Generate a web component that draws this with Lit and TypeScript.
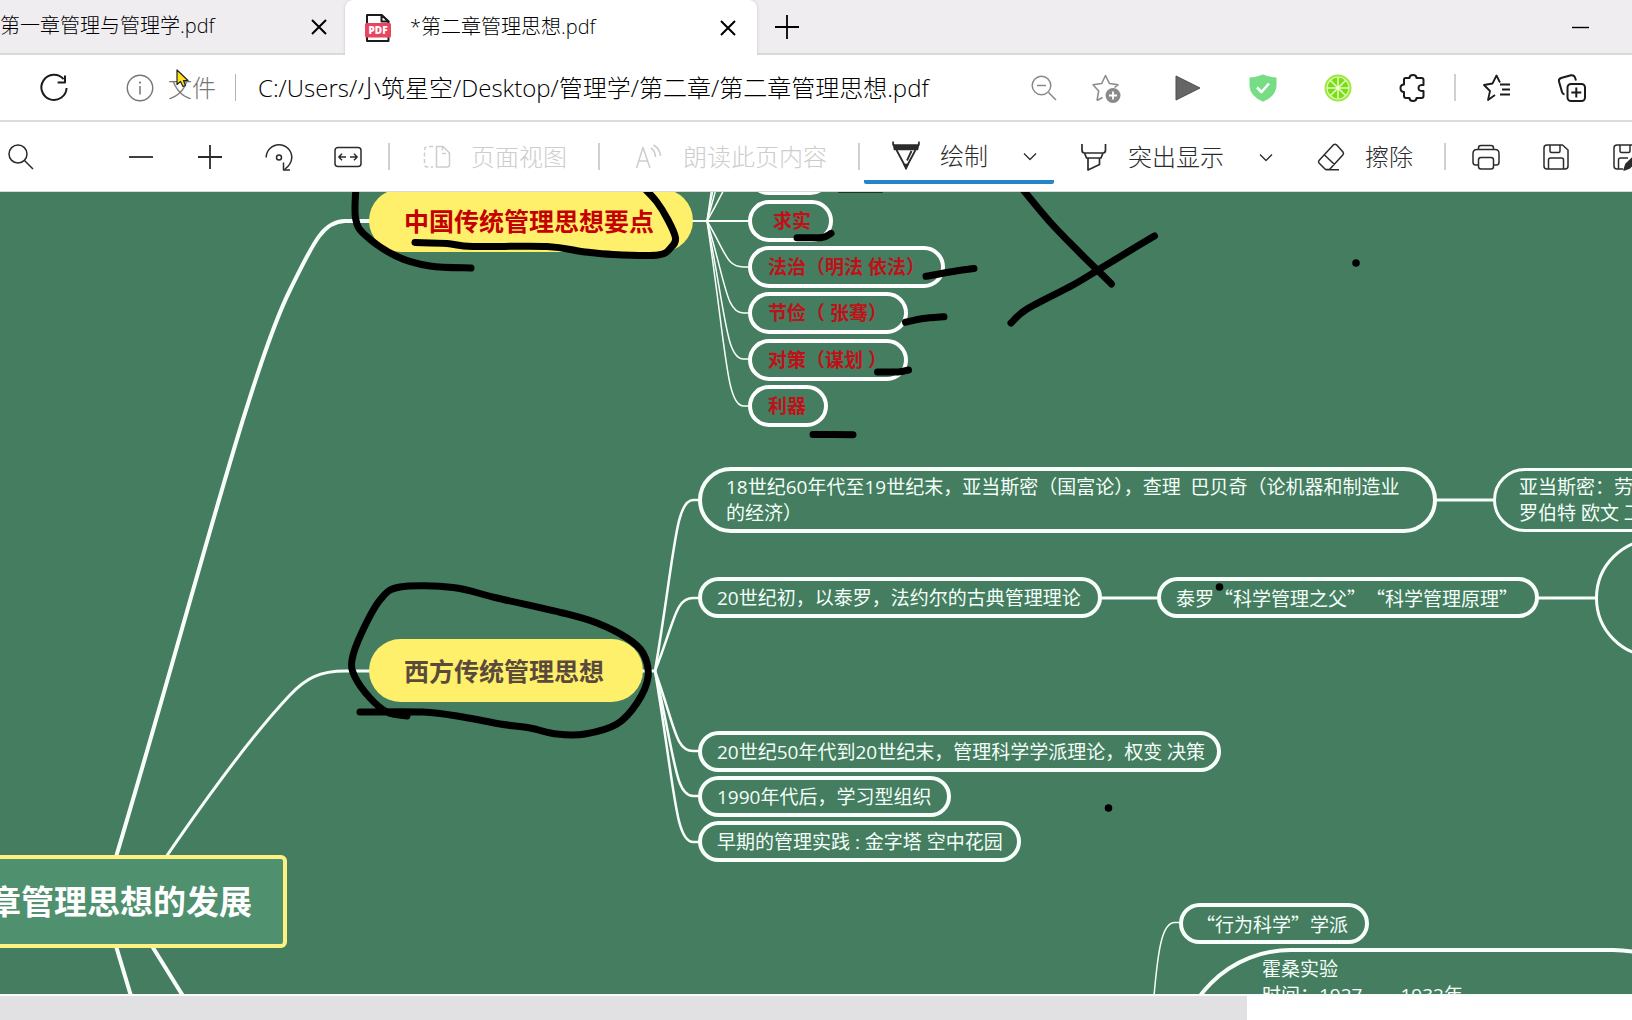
import { LitElement, html, svg, css } from "lit";
import { customElement, property } from "lit/decorators.js";
import { styleMap } from "lit/directives/style-map.js";

type Pt = [number, number];

/** Smooth path through a list of points (Catmull-Rom to cubic Bézier). */
function smooth(pts: Pt[]): string {
  let d = `M${pts[0][0]} ${pts[0][1]}`;
  for (let i = 0; i < pts.length - 1; i++) {
    const a = pts[Math.max(0, i - 1)];
    const b = pts[i];
    const c = pts[i + 1];
    const e = pts[Math.min(pts.length - 1, i + 2)];
    const r = (n: number) => Math.round(n * 10) / 10;
    d += `C${r(b[0] + (c[0] - a[0]) / 6)} ${r(b[1] + (c[1] - a[1]) / 6)} ${r(c[0] - (e[0] - b[0]) / 6)} ${r(c[1] - (e[1] - b[1]) / 6)} ${c[0]} ${c[1]}`;
  }
  return d;
}

/** Branch line from a hub to the left edge of a child topic. */
function branch(hx: number, hy: number, x: number, y: number): string {
  const dx = x - hx;
  return `M${hx} ${hy}C${hx + dx * 0.45} ${hy + (y - hy) * 0.7} ${hx + dx * 0.45} ${y} ${hx + dx * 0.85} ${y}L${x} ${y}`;
}

const icons: Record<string, unknown> = {
  close: svg`<path d="M7 7L21 21M21 7L7 21" stroke-width="2"/>`,
  plus: svg`<path d="M14 2V26M2 14H26" stroke-width="1.800"/>`,
  minus: svg`<path d="M2 14H26" stroke-width="1.800"/>`,
  minimise: svg`<path d="M6 14.500H23" stroke-width="1.400"/>`,
  reload: svg`<path d="M23.6 5.2A12.6 12.6 0 1 0 26.6 14" stroke-width="2"/><path d="M25 1.5V8.6H17.6" stroke-width="2"/>`,
  info: svg`<circle cx="14" cy="14" r="12.7" stroke-width="1.4"/><path d="M14 12V20.5" stroke-width="1.5"/><circle cx="14" cy="8.6" r="1.1" fill="currentColor" stroke="none"/>`,
  zoomOut: svg`<circle cx="11.500" cy="11.500" r="9.3"/><path d="M18.500 18.500L26 26M7 11.500H16"/>`,
  starAdd: svg`<path d="M5 26.500L6.700 17L1 10.800L9.600 9.600L13.500 1.500L17.500 9.600L26 10.800L22.500 13.500M5 26.500L10.500 23.500"/><circle cx="21" cy="21.500" r="7.500" fill="currentColor" stroke="none"/><path d="M21 17.500V25.500M17 21.500H25" stroke="#fff" stroke-width="1.800"/>`,
  play: svg`<path d="M2 2L26 14L2 26Z" fill="#666" stroke="#4d4d4d" stroke-width="1"/>`,
  shield: svg`<path d="M14 .5Q20 3 27.500 3.500V12Q27 22 14 27.800Q1 22 .5 12V3.500Q8 3 14 .5Z" fill="#77dd85" stroke="none"/><path d="M8 13.500L12.500 18L20 9.500" stroke="#fff" stroke-width="2.600"/>`,
  lime: svg`<circle cx="14" cy="14" r="13.500" fill="#9be83f" stroke="none"/><circle cx="14" cy="14" r="11" fill="#7bdc18" stroke="#d8f7a8" stroke-width="1.200"/><path d="M14 3V25M3 14H25M6.200 6.200L21.800 21.800M21.800 6.200L6.200 21.800" stroke="#e4fbc0" stroke-width="1.600"/><circle cx="14" cy="14" r="2" fill="#effcd6" stroke="none"/>`,
  puzzle: svg`<path d="M5 5.500Q5 4 6.500 4H10.500Q10.500 .9 14 .9Q17.500 .9 17.500 4H22.500Q24.500 4 24.500 6V11Q19.500 10.500 19.500 14Q19.500 17.500 24.500 17V22Q24.500 24 22.500 24H17.500Q17.500 27.100 14 27.100Q10.500 27.100 10.500 24H7Q5 24 5 22V18Q1.500 18 1.500 14Q1.500 10.500 5 10.500Z" stroke-width="2"/>`,
  starList: svg`<path d="M12 21L5 26L7 17L1 11L9.500 9.500L13.500 1.500L17 8.500M17 10.500H27M19 15.500H27M17 20.500H27" stroke-width="1.800"/>`,
  collect: svg`<rect x="9.500" y="10" width="17.500" height="17" rx="3.500" stroke-width="2"/><path d="M18.300 13.500V23.500M13.300 18.500H23.300" stroke-width="2"/><path d="M6.500 20.500Q4.500 20 4 18L1 7.500Q.5 5 3 4L13 1.300Q16 .8 17 3.500L18 6.500" stroke-width="2"/>`,
  search: svg`<circle cx="11" cy="11" r="9"/><path d="M17.500 17.500L26 26"/>`,
  rotate: svg`<path d="M1.200 14.500A12.800 12.800 0 0 1 26.800 14.500Q26.500 21.500 19.500 26.500"/><path d="M18.500 19.500V27H25"/><circle cx="14" cy="14.500" r="2.500"/>`,
  fit: svg`<rect x="1" y="4.500" width="26" height="19" rx="3"/><path d="M12 14H5M8 10.800L4.800 14L8 17.200M16 14H23M20 10.800L23.200 14L20 17.200"/>`,
  pageView: svg`<path d="M13.500 3.500H20L26.500 10V21.500Q26.500 24 24 24H13.500Z"/><path d="M19.500 3.500V10.500H26.500M10 3.500H5Q1.500 3.500 1.500 7V21Q1.500 24 5 24H10" stroke-dasharray="4 2.500"/>`,
  readAloud: svg`<path d="M1.500 25L8 4.500L15 25M4 18H12.500M16 5Q20 7.500 20.500 14M18.500 2Q25 6 25.500 13"/>`,
  pen: svg`<path d="M1 0V3H27V0L25.500 7.500H2.500Z" fill="currentColor"/><path d="M4.500 8L12.500 23H15.500L23.500 8" stroke-width="1.800"/><path d="M12 22.500L14 27L16 22.500Z" fill="currentColor"/><path d="M19.500 9L15 18.500" stroke-width="1.800"/>`,
  highlighter: svg`<path d="M2 1V7Q2 10 4.500 10H23Q25.500 10 25.500 7V1M4.500 10L6.500 15H21L23 10M8 15V27L19.500 21.500V15" stroke-width="1.700"/>`,
  chevron: svg`<path d="M8 11.500L14 17.500L20 11.500" stroke-width="1.300"/>`,
  eraser: svg`<path d="M2 17.500L16.500 1.800Q18 .8 19.500 1.800L26 9Q27 10.500 26 11.800L12.500 26.500H8.500L2 20Q1 18.800 2 17.500ZM7.500 12L17.500 21.500M9 26.700H22"/>`,
  print: svg`<path d="M6.500 6V5Q6.500 2.500 9 2.500H19Q21.500 2.500 21.500 5V6M6.500 22H3.500Q1 22 1 19V10.500Q1 6.500 5 6.500H23Q27 6.500 27 10.500V19Q27 22 24.500 22H21.500"/><rect x="6.500" y="14.500" width="15" height="11.500" rx="2.500"/>`,
  save: svg`<path d="M5 2H20.500L26 7V23Q26 26 23 26H5Q2 26 2 23V5Q2 2 5 2ZM8 2V8Q8 9.500 9.500 9.500H16.500Q18 9.500 18 8V2M6.500 26V17Q6.500 15 8.500 15H19.500Q21.500 15 21.500 17V26"/>`,
  saveAs: svg`<path d="M11 26H5Q2 26 2 23V5Q2 2 5 2H20.500L26 7M8 2V8Q8 9.500 9.500 9.500H16.500Q18 9.500 18 8V2M6.500 26V17Q6.500 15 8.500 15H16"/><path d="M12 27L14 21L25 10.500L28 14L17.500 25Z" fill="currentColor"/>`,
  pdf: svg`<path d="M3 1H17.500L24.500 7.500V27H3Z" stroke="#1c1c1c" stroke-width="2" fill="#fff"/><path d="M17.500 1V7.500H24.500Z" fill="#fff" stroke="#1c1c1c" stroke-width="2"/><rect x="1" y="9" width="26" height="14.500" rx="1.500" fill="#ea4560" stroke="none"/><text x="14" y="20" text-anchor="middle" class="pdf-word">PDF</text>`,
};

@customElement("ui-icon")
class UiIcon extends LitElement {
  @property() name = "";
  static styles = css`
    :host { display: block; flex: none; width: 28px; height: 28px; }
    svg { display: block; width: 28px; height: 28px; overflow: visible; }
    .pdf-word { font: 800 10px "Open Sans", sans-serif; fill: #fff; stroke: none; }
  `;
  render() {
    return html`<svg viewBox="0 0 28 28" fill="none" stroke="currentColor" stroke-width="1.5" stroke-linejoin="round" aria-hidden="true">${icons[this.name]}</svg>`;
  }
}

interface Topic {
  kind: string;
  x: number;
  y: number;
  w: number;
  h: number;
  pad: number;
  lines: string[];
}

const topics: Topic[] = [
  { kind: "root", x: -20, y: 855, w: 307, h: 93, pad: 0, lines: ["章管理思想的发展"] },
  { kind: "main red", x: 369, y: 189, w: 324, h: 63, pad: 35, lines: ["中国传统管理思想要点"] },
  { kind: "main", x: 369, y: 639, w: 274, h: 63, pad: 35, lines: ["西方传统管理思想"] },
  { kind: "point", x: 748, y: 154, w: 83, h: 41, pad: 16, lines: [] },
  { kind: "point", x: 748, y: 200, w: 85, h: 42, pad: 21, lines: ["求实"] },
  { kind: "point", x: 748, y: 246, w: 197, h: 42, pad: 16, lines: ["法治（明法 依法）"] },
  { kind: "point", x: 748, y: 292, w: 160, h: 42, pad: 16, lines: ["节俭（ 张骞）"] },
  { kind: "point", x: 748, y: 339, w: 160, h: 42, pad: 16, lines: ["对策（谋划 ）"] },
  { kind: "point", x: 748, y: 385, w: 80, h: 42, pad: 16, lines: ["利器"] },
  { kind: "leaf", x: 698, y: 467, w: 739, h: 66, pad: 24, lines: ["18世纪60年代至19世纪末，亚当斯密（国富论），查理  巴贝奇（论机器和制造业", "的经济）"] },
  { kind: "leaf thin", x: 1493, y: 468, w: 400, h: 64, pad: 23, lines: ["亚当斯密：劳动", "罗伯特 欧文 工"] },
  { kind: "leaf", x: 698, y: 577, w: 404, h: 41, pad: 15, lines: ["20世纪初，以泰罗，法约尔的古典管理理论"] },
  { kind: "leaf quoted", x: 1157, y: 577, w: 382, h: 41, pad: 15, lines: ["泰罗“科学管理之父”“科学管理原理”"] },
  { kind: "leaf thin", x: 1595, y: 538, w: 300, h: 120, pad: 40, lines: [] },
  { kind: "leaf", x: 698, y: 731, w: 523, h: 41, pad: 15, lines: ["20世纪50年代到20世纪末，管理科学学派理论，权变 决策"] },
  { kind: "leaf", x: 698, y: 776, w: 253, h: 41, pad: 15, lines: ["1990年代后，学习型组织"] },
  { kind: "leaf", x: 698, y: 821, w: 323, h: 41, pad: 15, lines: ["早期的管理实践 : 金字塔 空中花园"] },
  { kind: "leaf quoted", x: 1179, y: 903, w: 190, h: 41, pad: 13, lines: ["“行为科学”学派"] },
  { kind: "leaf tall", x: 1176, y: 948, w: 552, h: 300, pad: 82, lines: ["霍桑实验", "时间：1927——1932年"] },
];

const links: { d: string; w: number }[] = [
  { w: 4, d: "M116 857C190 610 250 370 290 290C312 246 322 221 345 221H372" },
  { w: 3, d: "M166 857C205 800 255 732 290 695C306 678 320 671 345 671H372" },
  { w: 4, d: "M116 946L131 996" },
  { w: 4, d: "M152 946L183 996" },
  { w: 2, d: "M692 221H750" },
  ...[267, 313, 359, 406, 175, 129, 83, 37].map((y) => ({ w: 1.5, d: branch(707, 221, 750, y) })),
  { w: 3, d: "M642 671H656" },
  ...[500, 598, 751, 796, 842].map((y) => ({ w: 2.5, d: branch(655, 671, 700, y) })),
  { w: 3, d: "M1435 500H1495" },
  { w: 3, d: "M1100 598H1159" },
  { w: 3, d: "M1537 598H1597" },
  { w: 1.5, d: "M1154 996C1158 950 1162 922 1175 922.500L1181 922.500" },
];

const ink: Pt[][] = [
  [[356, 186], [355.5, 218], [365, 235], [396, 256], [430, 266], [471, 268]],
  [[415, 242.500], [447, 243.5], [473, 246.500], [547, 246.500], [583, 251.700], [613, 254.500], [658, 255], [671, 247.500], [675.500, 238], [668, 220], [656.500, 201.500], [644, 188]],
  [[797, 237.700], [821.700, 237.500], [831, 233.300]],
  [[926, 276.300], [950, 272], [974, 268.500]],
  [[905.500, 322.300], [923, 318.500], [944, 316.700]],
  [[877.500, 372], [898, 372], [908.500, 370]],
  [[813, 434.500], [853, 434.700]],
  [[1020, 186], [1050, 222], [1080, 253], [1111.500, 284]],
  [[1154.500, 236], [1131, 250], [1098, 270], [1073, 285], [1027, 309], [1011, 323]],
  [[360, 712], [423, 712], [463, 717], [500, 724], [530, 728], [557, 734], [585, 734], [617, 724], [637, 703], [648, 677], [643, 653], [627, 638], [597, 623], [563, 613], [497, 598], [453, 587.500], [400, 587], [380, 600], [362, 632], [352, 660], [355, 677], [370, 698], [387, 712], [407, 716]],
];

const dots: Pt[] = [[1356, 263], [1219.5, 587], [1108.500, 808]];

/** The page is scrolled: this is the drawing's y at the top edge of the view. */
const SCROLL_Y = 192;

@customElement("mind-map")
class MindMap extends LitElement {
  static styles = css`
    :host {
      display: block;
      position: relative;
      overflow: hidden;
      min-height: 802px;
      background: #457d60;
      font-family: "Open Sans", "Noto Sans CJK SC", sans-serif;
      font-weight: 400;
    }
    .layer { position: absolute; left: 0; top: 0; overflow: visible; }
    .topic {
      position: absolute;
      box-sizing: border-box;
      display: flex;
      flex-direction: column;
      justify-content: center;
      border-style: solid;
      white-space: pre;
    }
    .root {
      background: #4f906f;
      border-color: #fdf182;
      border-width: 4px;
      border-radius: 6px;
      color: #fff;
      align-items: flex-end;
      font-size: 33px;
      line-height: 48px;
      font-weight: 700;
      padding-right: 31px;
    }
    .main {
      border-width: 0;
      border-radius: 32px;
      background: #fff06b;
      color: #5a4a3c;
      font-size: 25px;
      line-height: 36px;
      font-weight: 700;
    }
    .red { color: #c40000; }
    .point {
      border: 4px solid #fff;
      border-radius: 21px;
      color: #c01018;
      font-size: 19px;
      line-height: 26px;
      font-weight: 700;
    }
    .leaf {
      border: 4px solid #f8fffb;
      border-radius: 33px;
      color: #f4fff9;
      font-size: 19px;
      line-height: 26px;
    }
    .thin { border-width: 3px; border-radius: 60px; }
    .quoted {
      font-family: "Noto Sans CJK SC", "Open Sans", sans-serif;
      text-spacing-trim: space-all;
    }
    .tall { border-radius: 115px; justify-content: flex-start; padding-top: 4px; }
  `;

  render() {
    return html`
      <svg class="layer" width="1632" height="802" viewBox="0 ${SCROLL_Y} 1632 802" fill="none" stroke="#f8fffb" aria-hidden="true">
        ${links.map((l) => svg`<path d=${l.d} stroke-width=${l.w}/>`)}
      </svg>
      ${topics.map(
        (t) => html`<div
          class="topic ${t.kind}"
          style=${styleMap({
            left: `${t.x}px`,
            top: `${t.y - SCROLL_Y}px`,
            width: `${t.w}px`,
            height: `${t.h}px`,
            paddingLeft: `${t.pad}px`,
          })}
        >${t.lines.map((l) => html`<span>${l}</span>`)}</div>`
      )}
      <svg class="layer" width="1632" height="802" viewBox="0 ${SCROLL_Y} 1632 802" fill="none" stroke="#000" stroke-width="7" stroke-linecap="round" stroke-linejoin="round" aria-hidden="true">
        ${ink.map((p) => svg`<path d=${smooth(p)}/>`)}
        <path d="M839 192H882" stroke-width="2" stroke="#1d3328"/>
        ${dots.map((p) => svg`<circle cx=${p[0]} cy=${p[1]} r="3.8" fill="#000" stroke="none"/>`)}
      </svg>
    `;
  }
}

@customElement("app-root")
class AppRoot extends LitElement {
  static styles = css`
    :host {
      display: flex;
      flex-direction: column;
      position: relative;
      min-height: 100vh;
      overflow: hidden;
      background: #fff;
      color: #1b1b1b;
      font-family: "Open Sans", "Noto Sans CJK SC", sans-serif;
      font-weight: 300;
    }
    button {
      display: flex;
      align-items: center;
      flex: none;
      margin: 0;
      padding: 0;
      border: 0;
      background: none;
      color: inherit;
      font: inherit;
      white-space: nowrap;
    }
    .tabs {
      display: flex;
      height: 53px;
      background: #f0edf1;
      border-bottom: 2px solid #dcd9dd;
      color: #000;
    }
    .tab {
      display: flex;
      align-items: center;
      box-sizing: border-box;
      width: 345px;
      flex: none;
      padding-right: 12px;
      font-size: 20px;
      line-height: 30px;
    }
    .tab-title { flex: 1; padding-bottom: 2px; white-space: nowrap; }
    .tab.active {
      width: 412px;
      height: 55px;
      gap: 18px;
      padding-left: 19px;
      padding-right: 15px;
      background: #fff;
      border-radius: 8px 8px 0 0;
      box-shadow: 0 0 3px #c4c0c6;
      clip-path: inset(0 -4px 0 -4px);
    }
    .new-tab { margin-left: 16px; }
    .minimise { margin-left: auto; margin-right: 38px; }
    .address {
      display: flex;
      align-items: center;
      height: 65px;
      padding: 0 46px 0 40px;
      border-bottom: 2px solid #dcdcdc;
      font-size: 24px;
      line-height: 34px;
    }
    .site { gap: 14px; margin-left: 58px; color: #767676; }
    .rule { flex: none; width: 2px; height: 27px; background: #d0d0d0; }
    .rule.site-end { width: 1px; margin: 0 22px 0 19px; background: #b4b4b4; }
    .url {
      flex: 1;
      min-width: 0;
      height: 36px;
      margin: 0;
      padding: 0;
      border: 0;
      outline: 0;
      background: none;
      color: #000;
      font: 300 24px/36px "Open Sans", "Noto Sans CJK SC", sans-serif;
    }
    .pale { color: #8a8a8a; }
    .actions { display: flex; align-items: center; gap: 54px; }
    .group { display: flex; align-items: center; gap: 34px; }
    .group.wide { gap: 47px; }
    .group.ruled { gap: 27px; }
    .toolbar {
      display: flex;
      align-items: center;
      height: 69px;
      padding-left: 7px;
      border-bottom: 1px solid #d5dbd8;
      color: #2b2b2b;
      font-size: 24px;
      line-height: 34px;
    }
    .zooming { display: flex; gap: 41px; margin-left: 92px; margin-right: 26px; }
    .disabled { color: #cdcdcd; }
    .labelled { gap: 20px; }
    .page-view { margin: 0 31px 0 33px; }
    .read { margin: 0 31px 0 35px; }
    .split { display: flex; align-items: center; gap: 28px; }
    .draw {
      align-self: flex-start;
      box-sizing: border-box;
      height: 62px;
      margin-left: 4px;
      padding: 10px 10px 0 28px;
      border-bottom: 4px solid #2684c8;
      border-radius: 2px;
    }
    .mark { margin-left: 26px; margin-right: 37px; }
    .erase { margin-right: 31px; }
    .files { display: flex; align-items: center; gap: 42px; margin-left: 26px; }
    mind-map { flex: 1; border-bottom: 2px solid #fbfbfb; }
    .scroll { display: flex; height: 24px; background: #fff; }
    .thumb { width: 76.4%; background: #e1e0e2; }
    .pointer { position: absolute; left: 176px; top: 69px; width: 14px; height: 20px; }
  `;

  private btn(icon: string, label: string, cls = "") {
    return html`<button class=${cls} aria-label=${label}><ui-icon name=${icon}></ui-icon></button>`;
  }

  render() {
    return html`
      <header class="tabs">
        <div class="tab">
          <span class="tab-title">第一章管理与管理学.pdf</span>
          ${this.btn("close", "关闭标签页")}
        </div>
        <div class="tab active">
          <ui-icon name="pdf"></ui-icon>
          <span class="tab-title">*第二章管理思想.pdf</span>
          ${this.btn("close", "关闭标签页")}
        </div>
        ${this.btn("plus", "新建标签页", "new-tab")}
        ${this.btn("minimise", "最小化", "minimise")}
      </header>
      <div class="address">
        ${this.btn("reload", "刷新")}
        <button class="site"><ui-icon name="info"></ui-icon>文件</button>
        <span class="rule site-end"></span>
        <input class="url" aria-label="地址" value="C:/Users/小筑星空/Desktop/管理学/第二章/第二章管理思想.pdf" />
        <div class="actions">
          <div class="group pale">${this.btn("zoomOut", "缩小")}${this.btn("starAdd", "添加到收藏夹")}</div>
          <div class="group wide">
            ${this.btn("play", "播放")}${this.btn("shield", "防护")}${this.btn("lime", "扩展程序")}
            <div class="group ruled">
              ${this.btn("puzzle", "扩展")}<span class="rule"></span>${this.btn("starList", "收藏夹")}
            </div>
            ${this.btn("collect", "集锦")}
          </div>
        </div>
      </div>
      <div class="toolbar">
        ${this.btn("search", "查找")}
        <div class="zooming">
          ${this.btn("minus", "缩小页面")}${this.btn("plus", "放大页面")}${this.btn("rotate", "旋转")}${this.btn("fit", "适合宽度")}
        </div>
        <span class="rule"></span>
        <button class="labelled disabled page-view" disabled><ui-icon name="pageView"></ui-icon>页面视图</button>
        <span class="rule"></span>
        <button class="labelled disabled read" disabled><ui-icon name="readAloud"></ui-icon>朗读此页内容</button>
        <span class="rule"></span>
        <div class="split draw">
          <button class="labelled"><ui-icon name="pen"></ui-icon>绘制</button>
          ${this.btn("chevron", "绘制选项")}
        </div>
        <div class="split mark">
          <button class="labelled"><ui-icon name="highlighter"></ui-icon>突出显示</button>
          ${this.btn("chevron", "突出显示选项")}
        </div>
        <button class="labelled erase"><ui-icon name="eraser"></ui-icon>擦除</button>
        <span class="rule"></span>
        <div class="files">
          ${this.btn("print", "打印")}${this.btn("save", "保存")}${this.btn("saveAs", "另存为")}
        </div>
      </div>
      <mind-map></mind-map>
      <div class="scroll"><div class="thumb"></div></div>
      <svg class="pointer" viewBox="0 0 14 20" aria-hidden="true">
        <path d="M1 1V15.500L4.500 12.500L7 17.500L9.500 16.500L7.500 11.500H12Z" fill="#ffe11a" stroke="#222" stroke-width="1.200" stroke-linejoin="round"/>
      </svg>
    `;
  }
}
